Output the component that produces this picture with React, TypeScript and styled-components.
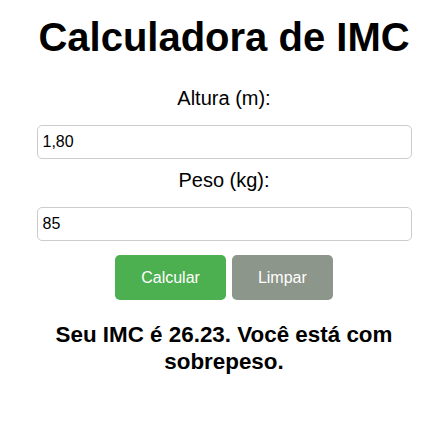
import React, { useState } from "react";
import styled, { createGlobalStyle } from "styled-components";

const GlobalStyle = createGlobalStyle`
  body {
    margin: 0;
    background: #fff;
    font-family: "Liberation Sans", Arial, sans-serif;
    color: #000;
  }
`;

const Page = styled.div`
  width: 375px;
  margin: 0 auto;
  padding-top: 14px;
  display: flex;
  flex-direction: column;
  align-items: stretch;
  text-align: center;
`;

const Title = styled.h1`
  margin: 0 0 17px;
  font-size: 40px;
  font-weight: 700;
  line-height: 46px;
  white-space: nowrap;
`;

const Label = styled.label`
  display: block;
  margin: 10px 0 15px;
  font-size: 20px;
  line-height: 23px;
`;

const Input = styled.input`
  box-sizing: border-box;
  width: 100%;
  height: 34px;
  padding: 0 5px;
  border: 1px solid #ccc;
  border-radius: 5px;
  font-family: inherit;
  font-size: 16px;
  color: #000;
  outline: none;
`;

const Actions = styled.div`
  display: flex;
  justify-content: center;
  gap: 6px;
  margin-top: 14px;
`;

const Button = styled.button<{ $tone: "green" | "gray" }>`
  height: 45px;
  padding: 0 26px;
  border: none;
  border-radius: 5px;
  background: ${p => (p.$tone === "green" ? "#4caf50" : "#8d968a")};
  color: #fff;
  font-family: inherit;
  font-size: 16px;
  cursor: pointer;
`;

const Result = styled.p`
  margin: 21px 0 0;
  font-size: 22.4px;
  font-weight: 700;
  line-height: 27px;
`;

function classify(imc: number) {
  if (imc < 18.5) return "abaixo do peso";
  if (imc < 25) return "com peso normal";
  if (imc < 30) return "com sobrepeso";
  return "com obesidade";
}

export default function App() {
  const [altura, setAltura] = useState("1,80");
  const [peso, setPeso] = useState("85");
  const [imc, setImc] = useState<number | null>(85 / (1.8 * 1.8));

  const calcular = () => {
    const a = parseFloat(altura.replace(",", "."));
    const p = parseFloat(peso.replace(",", "."));
    if (a > 0 && p > 0) setImc(p / (a * a));
  };

  const limpar = () => {
    setAltura("");
    setPeso("");
    setImc(null);
  };

  return (
    <>
      <GlobalStyle />
      <Page>
        <Title>Calculadora de IMC</Title>
        <Label htmlFor="altura">Altura (m):</Label>
        <Input id="altura" value={altura} onChange={e => setAltura(e.target.value)} />
        <Label htmlFor="peso">Peso (kg):</Label>
        <Input id="peso" value={peso} onChange={e => setPeso(e.target.value)} />
        <Actions>
          <Button $tone="green" onClick={calcular}>Calcular</Button>
          <Button $tone="gray" onClick={limpar}>Limpar</Button>
        </Actions>
        {imc !== null && (
          <Result>
            Seu IMC é {imc.toFixed(2)}. Você está {classify(imc)}.
          </Result>
        )}
      </Page>
    </>
  );
}
